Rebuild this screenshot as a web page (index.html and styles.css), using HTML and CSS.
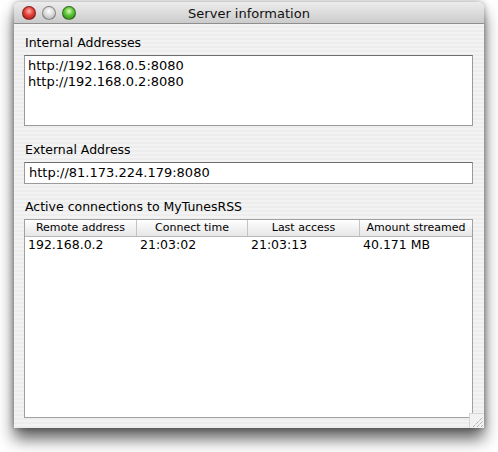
FILE: index.html
```html
<!DOCTYPE html>
<html>
<head>
<meta charset="utf-8">
<link rel="stylesheet" href="styles.css">
</head>
<body>
<div class="window">
  <div class="titlebar">
    <div class="lights">
      <span class="light red"></span>
      <span class="light gray"></span>
      <span class="light green"></span>
    </div>
    <div class="title">Server information</div>
  </div>
  <div class="content">
    <div class="label">Internal Addresses</div>
    <div class="box list">
      <div>http://192.168.0.5:8080</div>
      <div>http://192.168.0.2:8080</div>
    </div>
    <div class="label">External Address</div>
    <div class="box field">http://81.173.224.179:8080</div>
    <div class="label">Active connections to MyTunesRSS</div>
    <div class="box table">
      <div class="thead">
        <div class="th">Remote address</div>
        <div class="th">Connect time</div>
        <div class="th">Last access</div>
        <div class="th last">Amount streamed</div>
      </div>
      <div class="tr">
        <div class="td">192.168.0.2</div>
        <div class="td">21:03:02</div>
        <div class="td">21:03:13</div>
        <div class="td">40.171 MB</div>
      </div>
    </div>
  </div>
  <div class="grip">
    <svg width="14" height="14" viewBox="0 0 14 14">
      <path d="M3 13 L13 3 M7 13 L13 7 M11 13 L13 11" stroke="#8c8c8c" stroke-width="1" stroke-dasharray="1 1" fill="none"/>
    </svg>
  </div>
</div>
</body>
</html>
```
FILE: styles.css
```css
html, body {
  margin: 0;
  padding: 0;
  background: #ffffff;
}
body {
  font-family: "DejaVu Sans", "Liberation Sans", sans-serif;
  font-size: 12px;
  color: #000;
  min-height: 452px;
  padding-top: 2px;
  box-sizing: border-box;
}
.window {
  position: relative;
  margin: 0 0 0 14px;
  width: 470px;
  height: 426px;
  border-radius: 6px 6px 0 0;
  background: repeating-linear-gradient(to bottom, #ededed 0px, #ededed 2px, #f3f3f3 2px, #f3f3f3 4px);
  box-shadow: 0 11px 16px rgba(0,0,0,0.62), 0 0 6px rgba(0,0,0,0.35);
  overflow: hidden;
}
.titlebar {
  position: relative;
  height: 21px;
  background: linear-gradient(to bottom, #ececec 0%, #dcdcdc 50%, #cbcbcb 100%);
  border-bottom: 1px solid #8e8e8e;
  border-radius: 6px 6px 0 0;
  display: flex;
  align-items: center;
  justify-content: center;
}
.lights {
  position: absolute;
  left: 8px;
  top: 4px;
  display: flex;
  gap: 6px;
}
.light {
  width: 14px;
  height: 14px;
  border-radius: 50%;
  box-sizing: border-box;
  border: 1px solid rgba(0,0,0,0.35);
}
.red { background: radial-gradient(circle at 50% 35%, #ffb0a8 0%, #e2403a 45%, #a01410 100%); }
.gray { background: radial-gradient(circle at 50% 35%, #ffffff 0%, #d8d8d8 50%, #a8a8a8 100%); }
.green { background: radial-gradient(circle at 50% 35%, #d8ffb0 0%, #5cc03a 45%, #2a7a12 100%); }
.title {
  font-size: 13px;
  color: #111;
  padding-top: 1px;
}
.content {
  padding: 11px 11px 0 10px;
  display: flex;
  flex-direction: column;
}
.label {
  font-size: 12.5px;
  line-height: 16px;
  margin-left: 1px;
  margin-bottom: 4px;
}
.box {
  background: #fff;
  border: 1px solid #9a9a9a;
  border-top-color: #6e6e6e;
  box-sizing: border-box;
  width: 449px;
}
.list {
  height: 71px;
  padding: 2px 0 0 3px;
  font-size: 13px;
  line-height: 16px;
  margin-bottom: 16px;
}
.field {
  height: 22px;
  padding: 2px 0 0 4px;
  font-size: 13px;
  line-height: 16px;
  margin-bottom: 15px;
}
.table {
  height: 199px;
  border-color: #a0a0a0;
}
.thead {
  display: grid;
  grid-template-columns: 112px 111px 112px 1fr;
  height: 16px;
  background: linear-gradient(to bottom, #ffffff 0%, #f2f2f2 50%, #e6e6e6 100%);
  border-bottom: 1px solid #b8b8b8;
}
.th {
  font-size: 11px;
  line-height: 16px;
  text-align: center;
  border-right: 1px solid #c4c4c4;
}
.th.last { border-right: none; }
.tr {
  display: grid;
  grid-template-columns: 112px 111px 112px 1fr;
  font-size: 12.5px;
  line-height: 16px;
  padding-top: 0px;
}
.td { padding-left: 3px; }
.grip {
  position: absolute;
  right: 0;
  bottom: 0;
  width: 14px;
  height: 14px;
  border-top: 1px solid #d6d6d6;
  border-left: 1px solid #d6d6d6;
  background: #f2f2f2;
}
.grip svg { display: block; }
```
